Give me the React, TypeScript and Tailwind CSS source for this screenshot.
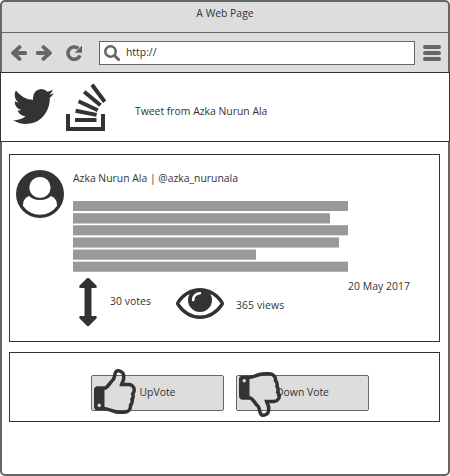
import React from "react";

const ink = "#333333";

function Twitter() {
  return (
    <svg className="block h-[35px] w-[41px]" viewBox="108 256 1576 1280" preserveAspectRatio="none" fill={ink}>
      <path d="M1684 408q-67 98-162 167 1 14 1 42 0 130-38 259.5t-115.5 248.5-184.5 210.5-258 146-323 54.5q-271 0-496-145 35 4 78 4 225 0 401-138-105-2-188-64.5t-114-159.5q33 5 61 5 43 0 85-11-112-23-185.5-111.5t-73.5-205.5v-4q68 38 146 41-66-44-105-115t-39-154q0-88 44-163 121 149 294.5 238.5t371.5 99.5q-8-38-8-74 0-134 94.5-228.5t228.5-94.5q140 0 236 102 109-21 205-78-37 115-142 178 93-10 186-50z" />
    </svg>
  );
}

function StackOverflow() {
  return (
    <svg className="block h-[49px] w-[42px]" viewBox="0 0 42 49" fill="none" stroke={ink} strokeWidth="4">
      <path d="M2 31v15h35V31M9 37h21.5M9.600 27.700l21 4.200M12.500 18.200l19.300 9M18.200 8.700l16.300 13.600M26 1.700l12.700 17" />
    </svg>
  );
}

function Avatar() {
  return (
    <svg className="block size-12" viewBox="0 0 48 48">
      <circle cx="24" cy="24" r="24" fill={ink} />
      <path d="M7 36q-.5-7 6-10c3 2.500 6 4 11 4s8-1.500 11-4q6.500 3 6 10a21 21 0 0 1-34 0Z" fill="white" />
      <circle cx="24" cy="17.500" r="10.600" fill="white" />
    </svg>
  );
}

function VerticalArrow() {
  return (
    <svg className="block h-12 w-[18px]" viewBox="0 0 18 48" fill={ink}>
      <path d="M9 0q.8 0 1.400.6l7 7q1.200 2.200-1 2.400H12.500v28h3.900q2.200.2 1 2.400l-7 7q-1.400 1.200-2.800 0l-7-7q-1.200-2.200 1-2.400h3.900V10H1.600q-2.200-.2-1-2.400l7-7Q8.200 0 9 0Z" />
    </svg>
  );
}

function Eye() {
  return (
    <svg className="block h-[31px] w-12" viewBox="0 384 1792 1152" preserveAspectRatio="none" fill={ink}>
      <path d="M1664 960q-152-236-381-353 61 104 61 225 0 185-131.500 316.500t-316.500 131.500-316.500-131.500-131.500-316.500q0-121 61-225-229 117-381 353 133 205 333.500 326.500t434.500 121.500 434.500-121.500 333.500-326.500zm-720-384q0-20-14-34t-34-14q-125 0-214.500 89.500t-89.500 214.500q0 20 14 34t34 14 34-14 14-34q0-86 61-147t147-61q20 0 34-14t14-34zm848 384q0 34-20 69-140 230-376.500 368.500t-499.500 138.500-499.500-139-376.500-368q-20-35-20-69t20-69q140-229 376.500-368t499.500-139 499.500 139 376.500 368q20 35 20 69z" />
    </svg>
  );
}

function Thumb({ className }: { className: string }) {
  return (
    <svg className={className} viewBox="128 0 1536 1664" preserveAspectRatio="none" fill={ink}>
      <path d="M384 1344q0-26-19-45t-45-19-45 19-19 45 19 45 45 19 45-19 19-45zm1152-576q0-51-39-89.500t-89-38.500h-352q0-58 48-159.500t48-160.500q0-98-32-145t-128-47q-26 26-38 85t-30.500 125.500-59.500 109.500q-22 23-77 91-4 5-23 30t-31.500 41-34.500 42.500-40 44-38.500 35.500-40 27-35.500 9h-32v640h32q13 0 31.500 3t33 6.500 38 11 35 11.500 35.500 12.500 29 10.500q211 73 342 73h121q192 0 192-167 0-26-5-56 30-16 47.500-52.500t17.500-73.500-18-69q53-50 53-119 0-25-10-55.500t-25-47.500q32-1 53.500-47t21.500-81zm128-1q0 89-49 163 9 33 9 69 0 77-38 144 3 21 3 43 0 101-60 178 1 139-85 219.500t-227 80.500h-129q-96 0-189.500-22.500t-216.500-65.500q-116-40-138-40h-288q-53 0-90.500-37.500t-37.500-90.500v-640q0-53 37.500-90.500t90.500-37.500h274q36-24 137-155 58-75 107-128 24-25 35.500-85.500t30.500-126.500 62-108q39-37 90-37 84 0 151 32.500t102 101.500 35 186q0 93-48 192h176q104 0 180 76t76 179z" />
    </svg>
  );
}

function NavArrow({ className = "" }: { className?: string }) {
  return (
    <svg className={`block h-4 w-4 ${className}`} viewBox="192 181 1472 1558" preserveAspectRatio="none" fill="#666">
      <path d="M1664 896v128q0 53-32.500 90.500t-84.500 37.500h-704l293 294q38 36 38 90t-38 90l-75 76q-37 37-90 37-52 0-91-37l-651-652q-37-37-37-90 0-52 37-91l651-650q38-38 91-38 52 0 90 38l75 74q38 38 38 91t-38 91l-293 293h704q52 0 84.500 37.500t32.500 90.500z" />
    </svg>
  );
}

const lines = [
  "w-[275px] border-t-[#999] border-b-white",
  "w-[257px] border-t-[#adadad] border-b-[#cccccc]",
  "w-[275px] border-t-[#b0b0b0] border-b-[#dddddd]",
  "w-[266px] border-t-[#c6c6c6] border-b-[#c6c6c6]",
  "w-[183px] border-t-[#cccccc] border-b-[#b8b8b8]",
  "w-[275px] border-t-[#dddddd] border-b-[#b0b0b0]",
];

export default function App() {
  return (
    <div className="h-[476px] w-[450px] bg-white">
      <div className="flex h-full flex-col overflow-hidden rounded-[5px] bg-[#666] font-['Open_Sans',sans-serif] text-[10.400px] leading-[14px] whitespace-nowrap text-[#333]">
        <div className="mx-0.5 mt-0.5 h-[30px] rounded-t-[3px] bg-[#ddd] pt-1 text-center">A Web Page</div>
        <div className="mx-0.5 mt-px flex h-[39px] items-center bg-[#ddd] pl-[9px]">
          <NavArrow />
          <NavArrow className="ml-[9px] -scale-x-100" />
          <svg className="ml-[14px] block size-4" viewBox="0 0 16 16">
            <path d="M14 10.300A6.200 6.200 0 1 1 12.200 3.400" fill="none" stroke="#666" strokeWidth="3.500" />
            <path d="M16 .6v7.200H8.800Z" fill="#666" />
          </svg>
          <div className="ml-[17px] flex h-6 w-[316px] items-center border border-[#666] bg-white pl-1">
            <svg className="block size-4" viewBox="0 0 16 16" fill="none" stroke="#666">
              <circle cx="6.500" cy="6.500" r="5.200" strokeWidth="2.600" />
              <path d="m10.500 10.500 4 4" strokeWidth="3" strokeLinecap="round" />
            </svg>
            <span className="ml-1.5 pb-0.5">http://</span>
          </div>
          <div className="ml-2 flex flex-col gap-0.5">
            <div className="h-1 w-[18px] rounded-full bg-[#666]" />
            <div className="h-1 w-[18px] rounded-full bg-[#666]" />
            <div className="h-1 w-[18px] rounded-full bg-[#666]" />
          </div>
        </div>

        <header className="flex h-[70px] shrink-0 items-start border border-[#333] bg-white pl-[11.500px]">
          <div className="pt-4"><Twitter /></div>
          <div className="pt-2.5 pl-[12.500px]"><StackOverflow /></div>
          <div className="pt-[31px] pl-[27px]">Tweet from Azka Nurun Ala</div>
        </header>

        <main className="mx-0.5 mb-0.5 grow rounded-b-[3px] bg-white px-[7px] pt-3">
          <section className="flex h-[188px] w-[431px] border border-[#333]">
            <div className="pt-[15px] pl-1.5"><Avatar /></div>
            <div className="pt-4 pl-[9px]">
              <div>Azka Nurun Ala | @azka_nurunala</div>
              <div className="mt-4 flex flex-col gap-px">
                {lines.map((line, i) => (
                  <div key={i} className={`h-[11px] border-y bg-[#999] ${line}`} />
                ))}
              </div>
              <div className="flex items-start">
                <div className="pt-1.5 pl-1.5"><VerticalArrow /></div>
                <div className="w-[54px] pt-[22px] pl-[13px] tracking-[0.06px]">30 votes</div>
                <div className="pt-4 pl-[25px]"><Eye /></div>
                <div className="w-[61px] pt-[26px] pl-3 tracking-[0.12px]">365 views</div>
                <div className="pt-[7px] pl-[63px] tracking-[0.06px]">20 May 2017</div>
              </div>
            </div>
          </section>

          <section className="mt-2.5 flex h-[70px] w-[431px] gap-3 border border-[#333] pt-[22px] pl-[81px]">
            <button className="relative h-9 w-[133px] rounded-[2px] border border-[#666] bg-[#ddd] pb-0.5">
              UpVote
              <Thumb className="absolute top-[-7px] left-[2px] h-[45px] w-[42px]" />
            </button>
            <button className="relative h-9 w-[133px] rounded-[2px] border border-[#666] bg-[#ddd] pb-0.5">
              Down Vote
              <Thumb className="absolute top-[-4px] left-[2px] h-[45px] w-[42px] -scale-y-100" />
            </button>
          </section>
        </main>
      </div>
    </div>
  );
}
